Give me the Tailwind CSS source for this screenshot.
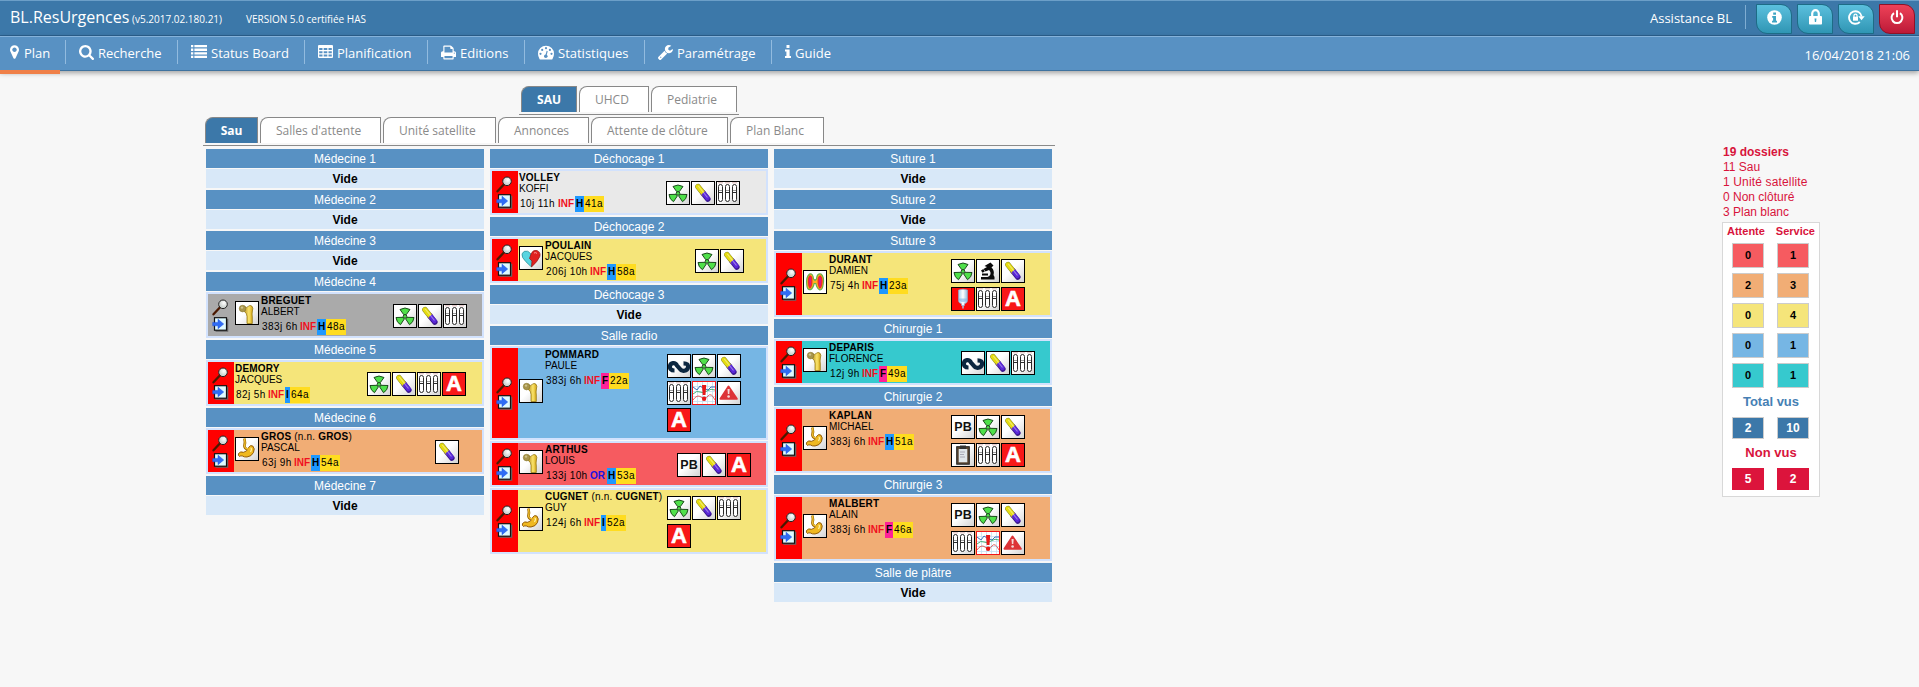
<!DOCTYPE html>
<html lang="fr" class="bg-[#f7f7f7]">
<head>
<meta charset="utf-8">
<title>BL.ResUrgences</title>
<script src="https://cdn.jsdelivr.net/npm/@tailwindcss/browser@4"></script>
</head>
<body class="h-[687px] overflow-hidden bg-[#f7f7f7] font-['Liberation_Sans',Arial,sans-serif] text-[12px] text-black">

<svg class="absolute size-0" aria-hidden="true">
  <defs>
    <linearGradient id="paper" x1="0" y1="0" x2="1" y2="1"><stop offset="0.45" stop-color="#fff"/><stop offset="1" stop-color="#d4d4d4"/></linearGradient>
    <linearGradient id="bonefill" x1="0" y1="0" x2="1" y2="0"><stop offset="0" stop-color="#b89020"/><stop offset=".55" stop-color="#fbe46a"/><stop offset="1" stop-color="#d0a010"/></linearGradient>
    <radialGradient id="lens" cx=".6" cy=".35"><stop offset="0" stop-color="#fff"/><stop offset="1" stop-color="#cdd3d0"/></radialGradient>
    <linearGradient id="bag" x1="0" x2="1"><stop offset="0" stop-color="#a8d0f0"/><stop offset=".5" stop-color="#fff"/><stop offset="1" stop-color="#8fb8dc"/></linearGradient>
  </defs>
  <symbol id="radio" viewBox="0 0 22 22"><rect width="22" height="22" fill="url(#paper)"/>
    <g fill="#4fe04a" stroke="#1d4a1d" stroke-width="1">
      <path d="M9.700 9.600L6 4.500Q11 1.500 16 4.500L12.300 9.600Z"/>
      <path d="M9 12.300L2 12.500Q2.500 17.500 6.500 19.700L10.300 14Z"/>
      <path d="M13 12.300L20 12.500Q19.500 17.500 15.500 19.700L11.700 14Z"/>
      <circle cx="11" cy="11.400" r="1.800"/></g></symbol>
  <symbol id="pill" viewBox="0 0 22 22"><rect width="22" height="22" fill="url(#paper)"/>
    <path d="M6 4.800L11 11" stroke="#8a8a20" stroke-width="5.600" stroke-linecap="round"/>
    <path d="M11 11L15.800 17" stroke="#3b1790" stroke-width="5.600" stroke-linecap="round"/>
    <path d="M5.900 4.600L11 11" stroke="#e6dc10" stroke-width="4.600" stroke-linecap="round"/>
    <path d="M9.500 12.300L13.200 9.300L17.600 15.200Q18 18.500 14.500 18.300Z" fill="#5a28d8"/>
    <path d="M6.300 4L15.500 15.500" stroke="#fff" stroke-opacity=".4" stroke-width="1.200"/></symbol>
  <symbol id="tubes" viewBox="0 0 22 22"><rect width="22" height="22" fill="url(#paper)"/>
    <g fill="#fff" stroke="#2a2a2a" stroke-width="1"><rect x="1.500" y="2.500" width="4" height="17" rx="2"/><rect x="8.500" y="2.500" width="4" height="17" rx="2"/><rect x="15.500" y="2.500" width="4" height="17" rx="2"/><path d="M1.500 10.500h4m3 0h4m3 0h4"/></g>
    <path d="M2 8.500h3m4 0h3m4 0h3" stroke="#999" stroke-width="1"/><path d="M1 .8h5m2 0h5m2 0h5" stroke="#d8a8a8" stroke-width=".8"/></symbol>
  <symbol id="infinity" viewBox="0 0 22 22"><rect width="22" height="22" fill="url(#paper)"/>
    <path d="M6.500 15.500C2.500 15.500 1.800 13 1.900 11.500C2.200 7.500 7.300 7 9 10.500L12 14C14 17 19.300 16.200 20 12.500C20.400 9.500 18.800 8.300 15.500 8.300" fill="none" stroke="#0c2740" stroke-width="4.200"/></symbol>
  <symbol id="chart" viewBox="0 0 22 22"><rect width="22" height="22" fill="#fff"/><path d="M0 4.500h22M0 9.500h22M0 14.500h22M0 19.500h22M4.500 0v22M9.500 0v22M14.500 0v22M19.500 0v22" stroke="#c4e0f2" stroke-width=".8"/>
    <g fill="none" stroke-width="1"><path d="M0 5L4 8L7 4L10 6L15 8L18 5L22 5" stroke="#3a6fb8"/><path d="M0 12Q4 8 7 10T14 9T22 8" stroke="#4ab078"/><path d="M0 18Q4 12 8 15T15 14T22 18" stroke="#e06060"/></g>
    <path d="M9 3h4.200l-.7 10h-2.800z" fill="#e81818"/><circle cx="11.100" cy="16.700" r="2.200" fill="#e81818"/></symbol>
  <symbol id="warn" viewBox="0 0 22 22"><rect width="22" height="22" fill="url(#paper)"/><path d="M10.500 4.500L18.800 16.800H2.500Z" fill="#dd3438" stroke="#dd3438" stroke-width="2" stroke-linejoin="round"/><path d="M9.500 7h2.200l-.4 5h-1.400z" fill="#f4d8d8"/><circle cx="10.600" cy="14.500" r="1.300" fill="#f4d8d8"/></symbol>
  <symbol id="scope" viewBox="0 0 22 22"><rect width="22" height="22" fill="url(#paper)"/><g fill="#0a0a0a"><path d="M7.500 6L13.500 2.500L16.500 5.500L14.500 7.500Q17.800 10.500 16.500 15L17.500 17V19.500H4V17H10.500Q14 15.500 13.500 12.500Q13 10.800 12 10L8.500 11.500L6.500 9L10 7Z"/><path d="M4 10.500l2.300-1.500 1.500 2.500-2.300 1.300zM5 13.500h6v2h-6z"/></g></symbol>
  <symbol id="drip" viewBox="0 0 22 22"><rect width="22" height="22" fill="#fb0808"/><path d="M6.500 2Q11 .3 15.500 2V12.500Q15.500 15 12.500 15.700V17.500H9.500V15.700Q6.500 15 6.500 12.500Z" fill="url(#bag)" stroke="#88aed0" stroke-width=".6"/><path d="M11 17v3.500" stroke="#9fd0f0" stroke-width="1.400"/><path d="M7 10.500h8v2q-4 3-8 0z" fill="#7fb4e4" fill-opacity=".6"/></symbol>
  <symbol id="clip" viewBox="0 0 22 22"><rect width="22" height="22" fill="url(#paper)"/><rect x="4.700" y="2.700" width="12.600" height="17.500" fill="#5a4632" stroke="#222" stroke-width="1"/><rect x="6.700" y="5" width="8.600" height="13.300" fill="#dfe6ea"/><rect x="8" y="1.500" width="6" height="3.500" fill="#333"/><path d="M8 8h5M8 10.500h4M8 13h5" stroke="#99a" stroke-width=".8"/></symbol>
  <symbol id="bone" viewBox="0 0 22 22"><rect width="22" height="22" fill="url(#paper)"/><path d="M11 21.500V14.500Q11 11.500 8.500 9.500L8 5Q11 6.200 12.500 4.200Q14 2.800 15.800 4Q17.600 6 16.400 9Q15.800 12 16.300 15V21.500Z" fill="url(#bonefill)" stroke="#8a6a00" stroke-width=".7"/><circle cx="6.600" cy="6.600" r="3.300" fill="#a8954c" stroke="#877528" stroke-width=".6"/><circle cx="6" cy="5.600" r="1.200" fill="#cfc48c"/></symbol>
  <symbol id="stomach" viewBox="0 0 22 22"><rect width="22" height="22" fill="url(#paper)"/><path d="M8.400 .5Q9.600 5 8.400 8Q8.600 10.500 11 11" stroke="#9a6400" stroke-width="2.600" fill="none"/><path d="M12.500 9.500Q14.500 6.500 16.800 8Q19.300 10.500 17.500 14.500Q15.500 18.500 11 19Q8 19.200 6.500 18Q4.500 17.500 3.500 18.500Q1.800 17.500 2.500 15.500Q4.500 13 7.500 14.300Q11 14 12.500 9.500Z" fill="#efb820" stroke="#885000" stroke-width=".9"/><path d="M8.400 .5Q9.600 5 8.500 8Q8.800 10.500 12.500 11" stroke="#efc030" stroke-width="1.300" fill="none"/><path d="M14.500 10Q16.500 10 14.500 14" stroke="#fff0a0" stroke-width="1.200" fill="none"/></symbol>
  <symbol id="heart" viewBox="0 0 22 22"><rect width="22" height="22" fill="url(#paper)"/><path d="M11 7Q8 2.800 4.300 4.300Q.6 6.500 2.600 10.500Q5 14.500 11.500 20Z" fill="#58d4e0" stroke="#268890" stroke-width=".7"/><path d="M11 7Q13 2.300 17 3.500Q21.200 5.500 19.700 9.700Q17.500 14.700 11.500 20L12 14L9.500 11.500Z" fill="#e02020" stroke="#901818" stroke-width=".7"/><path d="M14 6Q16 5 17 6.500" stroke="#ff9a9a" fill="none"/></symbol>
  <symbol id="lungs" viewBox="0 0 22 22"><rect width="22" height="22" fill="#fff"/><path d="M5.500 3Q9 2 9.500 8L11 9.500L12.500 8Q13 2 17 3Q20.500 6 19.200 13Q18.500 19.500 15.500 18.800Q12.800 17.500 11.800 12.500H10.200Q9 17.500 6.500 18.600Q3 19.500 2.700 13Q2 6 5.500 3Z" fill="#ffb020" stroke="#68b048" stroke-width="1.200"/><path d="M5.800 5Q8 5 7.800 9.500Q8 15 6 16.800Q4.500 15 4.500 11Q4 7 5.800 5ZM16.200 5Q18.500 7 17.800 12Q17.300 16.500 16 17Q14.200 15 14.200 10Q14 6 16.200 5Z" fill="#d81888" stroke="#f03020" stroke-width="1.300"/></symbol>
  <symbol id="loupe" viewBox="0 0 17 17"><path d="M8.300 8L1.500 15.300" stroke="#4a1800" stroke-width="2.300" stroke-linecap="round"/><circle cx="11" cy="5.300" r="4.300" fill="url(#lens)" stroke="#222" stroke-width="1"/></symbol>
  <symbol id="enter" viewBox="0 0 17 15"><path d="M3.500 2.500h12v11.500h-12" fill="none" stroke="#666" stroke-width="1.500"/><rect x="2.500" y=".700" width="12" height="12.500" fill="#dffaff" stroke="#111" stroke-width="1.200"/><path d="M.7 5.400H6V2.200L11.700 7L6 11.700V8.800H.7Z" fill="#2f6cf4" stroke="#1c50e0" stroke-width=".5"/></symbol>
</svg>

<header class="h-[36px] border-t border-b border-t-[#6c9fc8] border-b-[#2c618f] bg-[#3c78a9] font-['Open_Sans',sans-serif] text-white">
  <div class="flex h-full">
    <h1 class="ml-[10px] mt-[4px] w-[122px] whitespace-nowrap text-[16px] leading-[24px]">BL.ResUrgences</h1>
    <span class="mt-[8px] w-[114px] whitespace-nowrap text-[10px] leading-[20px]">(v5.2017.02.180.21)</span>
    <span class="mt-[8px] whitespace-nowrap text-[10px] leading-[20px]">VERSION 5.0 certifiée HAS</span>
    <span class="ml-auto mt-[7px] whitespace-nowrap text-[13px] leading-[20px]">Assistance BL</span>
    <div class="ml-[13px] mt-[4px] h-[24px] w-px bg-[#7fadd2]"></div>
    <div class="ml-[10px] mr-[4px] mt-[3px] flex gap-[5px]">
      <button class="flex h-[30px] w-[36px] justify-center rounded-tr-[11px] rounded-bl-[11px] border border-[#1d6c86] bg-linear-to-b from-[#5bc0de] to-[#2f96b4] pt-[5px]">
        <svg width="15" height="15" viewBox="0 0 15 15"><circle cx="7.500" cy="7.500" r="7.300" fill="#fff"/><path d="M6.200 2.500h2.800v2.200h-2.800zM5.200 6h3.800v4.700h1v1.700h-5v-1.700h1.100v-3h-.9z" fill="#3fa5c3"/></svg></button>
      <button class="flex h-[30px] w-[36px] justify-center rounded-tr-[11px] rounded-bl-[11px] border border-[#1d6c86] bg-linear-to-b from-[#5bc0de] to-[#2f96b4] pt-[4px]">
        <svg width="13" height="16" viewBox="0 0 13 16"><path d="M3.200 8V4.500a3.300 3.300 0 0 1 6.600 0V8" fill="none" stroke="#fff" stroke-width="2.200"/><rect y="7" width="13" height="8.500" rx=".8" fill="#fff"/><path d="M5.500 9.500h2l-.4 3.500h-1.200z" fill="#3fa5c3"/></svg></button>
      <button class="flex h-[30px] w-[36px] justify-center rounded-tr-[11px] rounded-bl-[11px] border border-[#1d6c86] bg-linear-to-b from-[#5bc0de] to-[#2f96b4] pt-[5px]">
        <svg width="17" height="15" viewBox="0 0 17 15"><path d="M11.800 12A6.300 6.300 0 1 1 13.600 6.500" fill="none" stroke="#fff" stroke-width="1.900"/><path d="M10.300 6.300h6.400l-3.200 4z" fill="#fff"/><rect x="5" y="6.700" width="5" height="4" fill="#fff"/><path d="M6 7V5.600a1.500 1.500 0 0 1 3 0V7" fill="none" stroke="#fff" stroke-width="1.200"/></svg></button>
      <button class="flex h-[30px] w-[36px] justify-center rounded-tr-[11px] rounded-bl-[11px] border border-[#8e1227] bg-linear-to-b from-[#ee4158] to-[#bd1838] pt-[5px]">
        <svg width="14" height="15" viewBox="0 0 14 15"><path d="M4 3.200A5.400 5.400 0 1 0 10 3.200" fill="none" stroke="#fff" stroke-width="2"/><path d="M7 .300v7" stroke="#fff" stroke-width="2"/></svg></button>
    </div>
  </div>
</header>

<nav class="flex h-[35px] border-t border-b border-t-[#85b2da] border-b-[#40739f] bg-[#5891c3] font-['Open_Sans',sans-serif] text-[13px] leading-[20px] text-white shadow-[0_2px_5px_rgba(0,0,0,0.35)]">
  <a class="relative flex w-[65px] pl-[10px]"><svg class="mt-[8px] mr-[5px] h-[14px] w-[9px]" viewBox="384 128 1024 1536" fill="#fff"><path d="M1152 640q0-106-75-181t-181-75-181 75-75 181 75 181 181 75 181-75 75-181zm256 0q0 109-33 179l-364 774q-16 33-47.500 52t-67.500 19-67.500-19-46.500-52l-365-774q-33-70-33-179 0-212 150-362t362-150 362 150 150 362z"/></svg><span class="mt-[6px]">Plan</span>
    <span class="absolute left-0 top-[33px] h-[4px] w-[60px] bg-[#f08048]"></span></a>
  <a class="flex w-[112px]"><i class="mt-[3px] h-[24px] w-px bg-[#92bbdf]"></i><svg class="ml-[13px] mt-[8px] mr-[4px] size-[15px]" viewBox="64 128 1664 1664" fill="#fff"><path d="M1216 832q0-185-131.500-316.500t-316.500-131.500-316.500 131.500-131.500 316.500 131.500 316.500 316.500 131.500 316.500-131.500 131.500-316.500zm512 832q0 52-38 90t-90 38q-54 0-90-38l-343-342q-179 124-399 124-143 0-273.500-55.500t-225-150-150-225-55.500-273.500 55.500-273.500 150-225 225-150 273.500-55.500 273.500 55.500 225 150 150 225 55.500 273.500q0 220-124 399l343 343q37 37 37 90z"/></svg><span class="mt-[6px]">Recherche</span></a>
  <a class="flex w-[127px]"><i class="mt-[3px] h-[24px] w-px bg-[#92bbdf]"></i><svg class="ml-[13px] mt-[8px] mr-[4px] h-[13px] w-[16px]" viewBox="0 0 16 13" fill="#fff"><path d="M0 0h2.300v2.300H0zM3.400 0H16v2.300H3.400zM0 3.600h2.300v2.300H0zM3.400 3.600H16v2.300H3.400zM0 7.200h2.300v2.300H0zM3.400 7.200H16v2.300H3.400zM0 10.700h2.300V13H0zM3.400 10.700H16V13H3.400z"/></svg><span class="mt-[6px] whitespace-nowrap">Status Board</span></a>
  <a class="flex w-[123px]"><i class="mt-[3px] h-[24px] w-px bg-[#92bbdf]"></i><svg class="ml-[13px] mt-[8px] mr-[4px] h-[13px] w-[15px]" viewBox="0 0 15 13" fill="#fff"><path fill-rule="evenodd" d="M1 0h13q1 0 1 1v11q0 1-1 1H1q-1 0-1-1V1q0-1 1-1zM1.200 3v2h3.300v-2zM5.700 3v2h3.600v-2zM10.500 3v2h3.300v-2zM1.200 6.200v2h3.300v-2zM5.700 6.200v2h3.600v-2zM10.500 6.200v2h3.300v-2zM1.200 9.500v2h3.300v-2zM5.700 9.500v2h3.600v-2zM10.500 9.500v2h3.300v-2z"/></svg><span class="mt-[6px]">Planification</span></a>
  <a class="flex w-[97px]"><i class="mt-[3px] h-[24px] w-px bg-[#92bbdf]"></i><svg class="ml-[13px] mt-[8px] mr-[4px] size-[15px]" viewBox="64 128 1664 1536" fill="#fff"><path d="M448 1536h896v-256h-896v256zm0-640h896v-384h-160q-40 0-68-28t-28-68v-160h-640v640zm1152 64q0-26-19-45t-45-19-45 19-19 45 19 45 45 19 45-19 19-45zm128 0v416q0 13-9.500 22.500t-22.500 9.500h-224v160q0 40-28 68t-68 28h-960q-40 0-68-28t-28-68v-160h-224q-13 0-22.500-9.500t-9.500-22.500v-416q0-79 56.500-135.500t135.500-56.500h64v-544q0-40 28-68t68-28h672q40 0 88 20t76 48l152 152q28 28 48 76t20 88v256h64q79 0 135.500 56.500t56.500 135.500z"/></svg><span class="mt-[6px]">Editions</span></a>
  <a class="flex w-[120px]"><i class="mt-[3px] h-[24px] w-px bg-[#92bbdf]"></i><svg class="ml-[13px] mt-[8px] mr-[4px] h-[15px] w-[16px]" viewBox="0 0 16 15"><path d="M1.500 14Q0 11.500 0 8.700A8 8 0 0 1 16 8.700Q16 11.500 14.500 14Q14.200 14.500 13.500 14.500H2.500Q1.800 14.500 1.500 14Z" fill="#fff"/><g fill="#5891c3"><circle cx="2.500" cy="8.800" r="1.100"/><circle cx="4.200" cy="4.900" r="1.100"/><circle cx="8" cy="3.200" r="1.100"/><circle cx="11.900" cy="4.900" r="1.100"/><circle cx="13.500" cy="8.800" r="1.100"/><circle cx="7.800" cy="11.200" r="1.800"/></g><path d="M7.800 11L9.200 6" stroke="#5891c3" stroke-width="1.100"/></svg><span class="mt-[6px]">Statistiques</span></a>
  <a class="flex w-[127px]"><i class="mt-[3px] h-[24px] w-px bg-[#92bbdf]"></i><svg class="ml-[13px] mt-[8px] mr-[4px] size-[15px]" viewBox="85 128 1643 1643" fill="#fff"><path d="M448 1472q0-26-19-45t-45-19-45 19-19 45 19 45 45 19 45-19 19-45zm644-420l-682 682q-37 37-90 37-52 0-91-37l-106-108q-38-36-38-90 0-53 38-91l681-681q39 98 114.500 173.500t173.500 114.500zm634-435q0 39-23 106-47 134-164.500 217.500t-258.500 83.500q-185 0-316.500-131.500t-131.500-316.500 131.500-316.500 316.500-131.500q58 0 121.500 16.500t107.500 46.500q16 11 16 28t-16 28l-293 169v224l193 107q5-3 79-48.500t135.500-81 70.500-35.500q15 0 23.500 10t8.500 25z"/></svg><span class="mt-[6px]">Paramétrage</span></a>
  <a class="flex"><i class="mt-[3px] h-[24px] w-px bg-[#92bbdf]"></i><svg class="ml-[13px] mt-[8px] mr-[4px] h-[13px] w-[6px]" viewBox="0 0 6 13" fill="#fff"><path d="M1.500 0h3v3h-3zM0 4.500h4.600v6.500H6v2H0v-2h1.400V6.500H0z"/></svg><span class="mt-[6px]">Guide</span></a>
  <time class="ml-auto mr-[9px] mt-[8px]">16/04/2018 21:06</time>
</nav>

<div class="flex">
  <main class="w-[852px] ml-[203px] pt-[15px] font-['Open_Sans',sans-serif] text-[12px] text-[#8a8a8a]">
    <div class="ml-[316px] flex w-[220px] gap-[2px] border-b border-[#8a8a8a] px-[2px] pb-[2px]">
      <a class="h-[26px] w-[56px] rounded-tl-[8px] border border-b-0 border-[#888] bg-[#3c78a9] text-center font-bold leading-[25px] text-white">SAU</a>
      <a class="h-[26px] w-[70px] rounded-tl-[8px] border border-b-0 border-[#888] bg-white pl-[15px] leading-[25px]">UHCD</a>
      <a class="h-[26px] w-[86px] rounded-tl-[8px] border border-b-0 border-[#888] bg-white pl-[15px] leading-[25px]">Pediatrie</a>
    </div>
    <div class="mt-[2px] flex gap-[2px] whitespace-nowrap border-b border-[#8a8a8a] px-[2px] pb-[2px]">
      <a class="h-[26px] w-[53px] rounded-tl-[8px] border border-b-0 border-[#888] bg-[#3c78a9] text-center font-bold leading-[25px] text-white">Sau</a>
      <a class="h-[26px] w-[121px] rounded-tl-[8px] border border-b-0 border-[#888] bg-white pl-[15px] leading-[25px]">Salles d'attente</a>
      <a class="h-[26px] w-[113px] rounded-tl-[8px] border border-b-0 border-[#888] bg-white pl-[15px] leading-[25px]">Unité satellite</a>
      <a class="h-[26px] w-[91px] rounded-tl-[8px] border border-b-0 border-[#888] bg-white pl-[15px] leading-[25px]">Annonces</a>
      <a class="h-[26px] w-[137px] rounded-tl-[8px] border border-b-0 border-[#888] bg-white pl-[15px] leading-[25px]">Attente de clôture</a>
      <a class="h-[26px] w-[94px] rounded-tl-[8px] border border-b-0 border-[#888] bg-white pl-[15px] leading-[25px]">Plan Blanc</a>
    </div>
    <div id="board" class="mt-[3px] flex gap-[6px] pl-[3px] font-['Liberation_Sans',Arial,sans-serif] text-black"></div>
  </main>

  <aside class="ml-[667px] mt-[73px] w-[98px] whitespace-nowrap text-[#d8143c]">
    <ul class="pl-[1px] pt-[1px] leading-[15px]"><li class="font-bold">19 dossiers</li><li>11 Sau</li><li class="tracking-[0.15px]">1 Unité satellite</li><li>0 Non clôturé</li><li>3 Plan blanc</li></ul>
    <div class="mt-[2px] h-[275px] border border-[#d8d8d8] bg-white text-center font-bold">
      <div class="flex justify-between pl-[4px] pr-[4px] pt-[2px] text-[11px] leading-[13px]"><span>Attente</span><span>Service</span></div>
      <div id="stats" class="mt-[5px] grid grid-cols-[32px_32px] gap-x-[13px] gap-y-[5px] pl-[9px] text-[11px] leading-[23px] text-black"></div>
      <p class="mt-[5px] h-[24px] text-[13px] leading-[17px] text-[#4680b4]">Total vus</p>
      <div class="grid grid-cols-[32px_32px] gap-x-[13px] pl-[9px] text-[12px] leading-[20px] text-white"><b class="border border-[#ccc] bg-[#3c78a9]">2</b><b class="border border-[#ccc] bg-[#3c78a9]">10</b></div>
      <p class="mt-[5px] h-[24px] text-[13px] leading-[17px]">Non vus</p>
      <div class="grid grid-cols-[32px_32px] gap-x-[13px] pl-[9px] text-[12px] leading-[22px] text-white"><b class="bg-[#dc143c]">5</b><b class="bg-[#dc143c]">2</b></div>
    </div>
  </aside>
</div>

<script>
const tone = {
  grey: 'bg-[#aaaaaa]', light: 'bg-[#e9e9e9]', yellow: 'bg-[#f5e57a]', orange: 'bg-[#f1ad75]',
  blue: 'bg-[#76b6e4]', red: 'bg-[#f65b60]', teal: 'bg-[#36c9ce]'
};
const sexTone = { H: 'bg-[#1e98ff]', I: 'bg-[#1e98ff]', F: 'bg-[#ff2098]' };
const sexWidth = { H: 'w-[9px]', I: 'w-[5px]', F: 'w-[8px]' };
const waitWidth = { 6: 'w-[32px]', 7: 'w-[38px]', 8: 'w-[44px]' };
const right = { 15: 'mr-[15px]', 16: 'mr-[16px]', 22: 'mr-[22px]', 23: 'mr-[23px]', 25: 'mr-[25px]', 26: 'mr-[26px]' };
const columns = { 1: 'grid-cols-[24px]', 2: 'grid-cols-[24px_24px]', 3: 'grid-cols-[24px_24px_24px]', 4: 'grid-cols-[24px_24px_24px_24px]' };
const height = { 1: 'h-[46px]', 2: 'h-[66px]', 3: 'h-[94px]' };
const padding = { 1: 'pt-[10px] gap-y-[4px]', 2: 'pt-[6px] gap-y-[4px]', 3: 'pt-[6px] gap-y-[3px]' };

const lettered = {
  letterA: '<b class="flex size-[24px] items-center justify-center border border-black bg-[#f81818] text-[22px] leading-[22px] text-white [-webkit-text-stroke:0.6px_white]">A</b>',
  pb: '<b class="flex size-[24px] items-center justify-center border border-black bg-linear-to-br from-white from-45% to-[#d4d4d4] text-[12.5px] leading-[22px] text-[#111]">PB</b>'
};
const picture = n => lettered[n] || `<svg class="size-[24px] border ${n === 'chart' ? 'border-[#f01818]' : 'border-black'}" viewBox="0 0 22 22"><use href="#${n}"/></svg>`;

function card(p) {
  const perRow = Math.min(p.acts.length, p.cols || 3);
  const rows = Math.ceil(p.acts.length / perRow);
  return `<div class="flex border-2 border-[#d2e2fd] ${height[rows]} ${tone[p.tone]}">
    <div class="flex w-[26px] shrink-0 flex-col items-center justify-center gap-[1px] pr-[1px] ${p.tone === 'grey' ? '' : 'bg-[#ff0000]'}">
      <svg class="size-[17px]"><use href="#loupe"/></svg><svg class="h-[15px] w-[17px]"><use href="#enter"/></svg>
    </div>
    ${p.icon ? `<div class="ml-[1px] mr-[1px] mb-[4px] shrink-0 self-center">${picture(p.icon)}</div>` : ''}
    <div class="ml-[1px] whitespace-nowrap pt-[1px] text-[10px] leading-[11px]">
      <div class="tracking-[0.2px]">${p.name}</div><div>${p.first}</div>
      <div class="ml-[1px] mt-[2px] flex leading-[16px]"><span class="tracking-[0.4px] ${waitWidth[p.wait.length]}">${p.wait}</span><b class="w-[17px] ${p.type ? 'text-[#2010e0]' : 'text-[#f01020]'}">${p.type || 'INF'}</b><b class="text-center ${sexWidth[p.sex]} ${sexTone[p.sex]}">${p.sex}</b><span class="w-[20px] bg-[#ffdc20] pl-[1px] tracking-[0.45px]">${p.age}</span></div>
    </div>
    <div class="ml-auto grid content-start gap-x-[1px] ${padding[rows]} ${columns[perRow]} ${right[p.right]}">${p.acts.map(picture).join('')}</div>
  </div>`;
}

const rooms = [
  [['Médecine 1'], ['Médecine 2'], ['Médecine 3'],
   ['Médecine 4', { tone: 'grey', icon: 'bone', name: '<b>BREGUET</b>', first: 'ALBERT', wait: '383j 6h', sex: 'H', age: '48a', right: 15, acts: ['radio', 'pill', 'tubes'] }],
   ['Médecine 5', { tone: 'yellow', name: '<b>DEMORY</b>', first: 'JACQUES', wait: '82j 5h', sex: 'I', age: '64a', right: 16, cols: 4, acts: ['radio', 'pill', 'tubes', 'letterA'] }],
   ['Médecine 6', { tone: 'orange', icon: 'stomach', name: '<b>GROS</b> (n.n. <b>GROS</b>)', first: 'PASCAL', wait: '63j 9h', sex: 'H', age: '54a', right: 23, acts: ['pill'] }],
   ['Médecine 7']],
  [['Déchocage 1', { tone: 'light', name: '<b>VOLLEY</b>', first: 'KOFFI', wait: '10j 11h', sex: 'H', age: '41a', right: 26, acts: ['radio', 'pill', 'tubes'] }],
   ['Déchocage 2', { tone: 'yellow', icon: 'heart', name: '<b>POULAIN</b>', first: 'JACQUES', wait: '206j 10h', sex: 'H', age: '58a', right: 22, acts: ['radio', 'pill'] }],
   ['Déchocage 3'],
   ['Salle radio',
    { tone: 'blue', icon: 'bone', name: '<b>POMMARD</b>', first: 'PAULE', wait: '383j 6h', sex: 'F', age: '22a', right: 25, acts: ['infinity', 'radio', 'pill', 'tubes', 'chart', 'warn', 'letterA'] },
    { tone: 'red', icon: 'bone', name: '<b>ARTHUS</b>', first: 'LOUIS', wait: '133j 10h', type: 'OR', sex: 'H', age: '53a', right: 15, acts: ['pb', 'pill', 'letterA'] },
    { tone: 'yellow', icon: 'stomach', name: '<b>CUGNET</b> (n.n. <b>CUGNET</b>)', first: 'GUY', wait: '124j 6h', sex: 'I', age: '52a', right: 25, acts: ['radio', 'pill', 'tubes', 'letterA'] }]],
  [['Suture 1'], ['Suture 2'],
   ['Suture 3', { tone: 'yellow', icon: 'lungs', name: '<b>DURANT</b>', first: 'DAMIEN', wait: '75j 4h', sex: 'H', age: '23a', right: 25, acts: ['radio', 'scope', 'pill', 'drip', 'tubes', 'letterA'] }],
   ['Chirurgie 1', { tone: 'teal', icon: 'bone', name: '<b>DEPARIS</b>', first: 'FLORENCE', wait: '12j 9h', sex: 'F', age: '49a', right: 15, acts: ['infinity', 'pill', 'tubes'] }],
   ['Chirurgie 2', { tone: 'orange', icon: 'stomach', name: '<b>KAPLAN</b>', first: 'MICHAEL', wait: '383j 6h', sex: 'H', age: '51a', right: 25, acts: ['pb', 'radio', 'pill', 'clip', 'tubes', 'letterA'] }],
   ['Chirurgie 3', { tone: 'orange', icon: 'stomach', name: '<b>MALBERT</b>', first: 'ALAIN', wait: '383j 6h', sex: 'F', age: '46a', right: 25, acts: ['pb', 'radio', 'pill', 'tubes', 'chart', 'warn'] }],
   ['Salle de plâtre']]
];

document.getElementById('board').innerHTML = rooms.map(col => `<section class="flex w-[278px] flex-col gap-[2px]">${col.map(([title, ...people]) =>
  `<div class="flex flex-col gap-[1px]"><h2 class="h-[19px] bg-[#5891c3] text-center text-[12px] leading-[20px] text-white">${title}</h2>${
    people.length ? people.map(card).join('') : '<p class="h-[19px] bg-[#d8e8f8] text-center text-[12px] font-bold leading-[20px]">Vide</p>'}</div>`).join('')}</section>`).join('');

document.getElementById('stats').innerHTML = [['red', 0, 1], ['orange', 2, 3], ['yellow', 0, 4], ['blue', 0, 1], ['teal', 0, 1]]
  .map(([t, a, b]) => `<b class="border border-[#ccc] ${tone[t]}">${a}</b><b class="border border-[#ccc] ${tone[t]}">${b}</b>`).join('');
</script>
</body>
</html>
